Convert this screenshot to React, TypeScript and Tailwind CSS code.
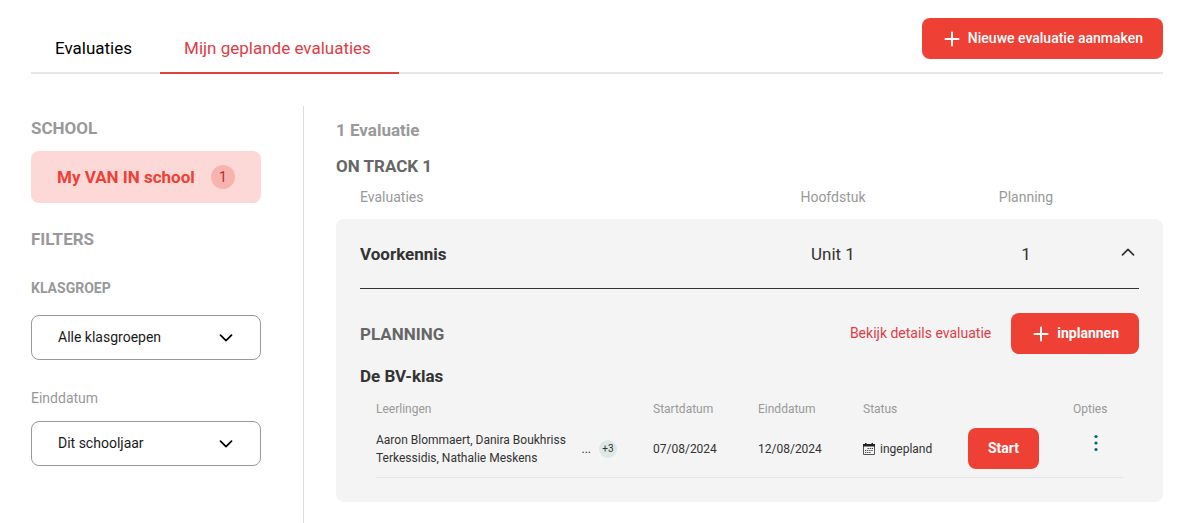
import React from "react";

function PlusIcon() {
  return (
    <svg width="16" height="16" viewBox="0 0 16 16" fill="none" stroke="currentColor" strokeWidth="2" strokeLinecap="round" aria-hidden="true">
      <path d="M8 1.5v13M1.5 8h13" />
    </svg>
  );
}

function ChevronIcon({ className }: { className?: string }) {
  return (
    <svg className={className} width="14" height="8" viewBox="0 0 14 8" fill="none" stroke="currentColor" strokeWidth="1.7" strokeLinecap="round" strokeLinejoin="round" aria-hidden="true">
      <path d="M1.5 1.2 7 6.7l5.5-5.5" />
    </svg>
  );
}

function CalendarIcon() {
  return (
    <svg width="12" height="12" viewBox="0 0 12 12" fill="none" aria-hidden="true">
      <path d="M0.5 1.500h11v10h-11z" stroke="#555" />
      <path d="M0 1h12v2.500H0z" fill="#222" />
      <path d="M2 0h1.500v1.500H2zM8.500 0H10v1.500H8.500z" fill="#222" />
      <path d="M4.500 5.500h5.500M2 7.500h8M2 9.500h5.500" stroke="#444" strokeWidth="1.100" strokeDasharray="1.300 0.800" />
    </svg>
  );
}

type ButtonProps = { children: React.ReactNode; icon?: boolean; bold?: boolean };

function RedButton({ children, icon, bold }: ButtonProps) {
  return (
    <button
      type="button"
      className={
        "flex h-[41px] items-center gap-2 whitespace-nowrap rounded-lg bg-[#ef4036] text-sm text-white " +
        (icon ? "pl-[22px] pr-5 " : "px-5 ") +
        (bold ? "font-bold" : "font-medium")
      }
    >
      {icon && <PlusIcon />}
      <span className="pb-0.5">{children}</span>
    </button>
  );
}

function Select({ id, options }: { id: string; options: string[] }) {
  return (
    <div className="relative">
      <select id={id} className="h-[45px] w-full appearance-none rounded-lg border border-[#999] bg-white px-[26px] pb-0.5 text-sm text-[#1a1a1a]">
        {options.map((option) => (
          <option key={option}>{option}</option>
        ))}
      </select>
      <ChevronIcon className="pointer-events-none absolute right-7 top-[19px] text-black" />
    </div>
  );
}

function Sidebar() {
  return (
    <aside className="w-[273px] shrink-0 border-r border-[#dcdcdc] pr-[42px] pt-3">
      <h2 className="font-bold leading-5 text-[#999]">SCHOOL</h2>
      <button type="button" className="mt-[13px] flex h-[52px] w-full items-center justify-between rounded-lg bg-[#fcd9d7] px-[26px] font-bold text-[#ef4036]">
        My VAN IN school
        <span className="flex size-6 items-center justify-center rounded-full bg-[#f9b3af] text-sm font-normal text-[#b0302a]">1</span>
      </button>
      <h2 className="mt-[26px] font-bold leading-5 text-[#999]">FILTERS</h2>
      <label htmlFor="klasgroep" className="mb-[17px] mt-[29px] block text-sm font-bold leading-5 text-[#999]">KLASGROEP</label>
      <Select id="klasgroep" options={["Alle klasgroepen"]} />
      <label htmlFor="einddatum" className="mb-[13px] mt-7 block text-sm leading-5 text-[#999]">Einddatum</label>
      <Select id="einddatum" options={["Dit schooljaar"]} />
    </aside>
  );
}

function PlanningTable() {
  return (
    <table className="w-full table-fixed border-collapse text-left text-xs text-[#333]">
      <thead>
        <tr className="h-[38px] text-[#999]">
          <th className="p-0 font-normal">Leerlingen</th>
          <th className="w-[105px] p-0 font-normal">Startdatum</th>
          <th className="w-[105px] p-0 font-normal">Einddatum</th>
          <th className="w-[105px] p-0 font-normal">Status</th>
          <th className="w-[105px] p-0" aria-label="Actie" />
          <th className="w-[50px] p-0 font-normal">Opties</th>
        </tr>
      </thead>
      <tbody>
        <tr className="border-b border-[#e5e5e5]">
          <td className="px-0 pb-2 pt-0">
            <div className="flex items-center pr-9">
              <p className="min-w-0 flex-1 leading-[18px]">Aaron Blommaert, Danira Boukhriss Terkessidis, Nathalie Meskens</p>
              <span className="ml-1 mr-2">...</span>
              <span className="flex size-[18px] items-center justify-center rounded-full bg-[#dce9e6] text-[10px]">+3</span>
            </div>
          </td>
          <td className="px-0 pb-2 pt-0">07/08/2024</td>
          <td className="px-0 pb-2 pt-0">12/08/2024</td>
          <td className="px-0 pb-2 pt-0">
            <span className="flex items-center gap-[5px]">
              <CalendarIcon />
              ingepland
            </span>
          </td>
          <td className="px-0 pb-2 pt-0">
            <RedButton bold>Start</RedButton>
          </td>
          <td className="px-0 pb-2 pt-0 align-top">
            <button type="button" aria-label="Opties" className="flex h-[30px] w-[45px] items-center justify-center text-[#00696b]">
              <svg width="4" height="18" viewBox="0 0 4 18" fill="currentColor" aria-hidden="true">
                <circle cx="2" cy="2.500" r="1.600" />
                <circle cx="2" cy="9" r="1.600" />
                <circle cx="2" cy="15.500" r="1.600" />
              </svg>
            </button>
          </td>
        </tr>
      </tbody>
    </table>
  );
}

function EvaluationTable() {
  return (
    <table className="w-full table-fixed border-separate border-spacing-0 text-[#333]">
      <thead>
        <tr className="h-[41px] text-sm text-[#999]">
          <th className="pb-1 pl-6 pr-0 pt-0 text-left font-normal">Evaluaties</th>
          <th className="w-[252px] px-0 pb-1 pt-0 font-normal">Hoofdstuk</th>
          <th className="w-[134px] px-0 pb-1 pt-0 font-normal">Planning</th>
          <th className="w-[70px] p-0" aria-label="Uitklappen" />
        </tr>
      </thead>
      <tbody>
        <tr className="h-[69px] bg-[#f4f4f4] text-center">
          <td className="rounded-tl-lg py-0 pl-6 pr-0 text-left font-bold">Voorkennis</td>
          <td className="p-0">Unit 1</td>
          <td className="p-0">1</td>
          <td className="rounded-tr-lg p-0">
            <button type="button" aria-label="Inklappen" className="flex h-6 w-full items-center justify-center pb-1">
              <ChevronIcon className="rotate-180" />
            </button>
          </td>
        </tr>
        <tr className="bg-[#f4f4f4]">
          <td colSpan={4} className="rounded-b-lg px-6 pb-6 pt-0">
            <div className="border-t border-[#333] pt-6">
              <div className="flex items-center">
                <h3 className="flex-1 font-bold text-[#666]">PLANNING</h3>
                <a href="#details" className="mr-5 pb-0.5 text-sm text-[#e03c46]">Bekijk details evaluatie</a>
                <RedButton icon bold>inplannen</RedButton>
              </div>
              <h4 className="mt-3 font-bold leading-5">De BV-klas</h4>
              <div className="mt-1 px-4">
                <PlanningTable />
              </div>
            </div>
          </td>
        </tr>
      </tbody>
    </table>
  );
}

export default function App() {
  return (
    <div className="flex min-h-screen flex-col bg-white pl-[31px] pr-[33px] font-['Roboto',sans-serif] text-[17px] leading-6">
      <header className="flex h-[74px] items-end border-b-2 border-[#e8e8e8]">
        <nav className="-mb-[2px] flex flex-1 gap-1">
          <a href="#evaluaties" className="border-b-2 border-transparent px-6 pb-3 text-black">Evaluaties</a>
          <a href="#gepland" className="border-b-2 border-[#e0403f] pb-3 pl-6 pr-7 text-[#e03c46]">Mijn geplande evaluaties</a>
        </nav>
        <div className="mb-[13px]">
          <RedButton icon>Nieuwe evaluatie aanmaken</RedButton>
        </div>
      </header>
      <div className="mt-8 flex flex-1">
        <Sidebar />
        <main className="min-w-0 flex-1 pl-8 pt-3">
          <p className="font-bold text-[#999]">1 Evaluatie</p>
          <h2 className="mt-3 font-bold text-[#666]">ON TRACK 1</h2>
          <EvaluationTable />
        </main>
      </div>
    </div>
  );
}
